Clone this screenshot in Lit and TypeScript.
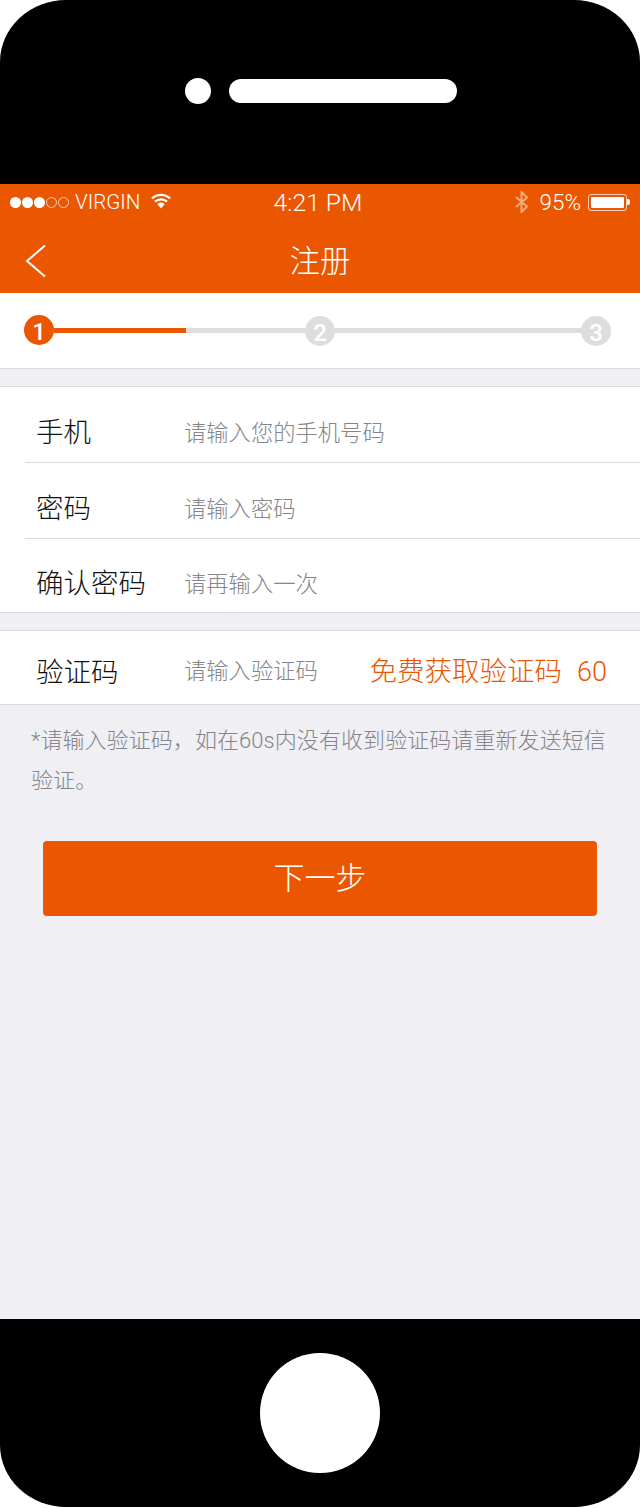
import { LitElement, html, css } from "lit";
import { customElement } from "lit/decorators.js";

@customElement("app-root")
export class AppRoot extends LitElement {
  static styles = css`
    :host { display: block; width: 640px; height: 1508px; background: #fff; font-family: Roboto, "Noto Sans CJK SC", sans-serif; }
    * { box-sizing: border-box; }
    .phone { width: 640px; height: 1507px; background: #000; border-radius: 66px / 62px; overflow: hidden; display: flex; flex-direction: column; }
    .top { height: 184px; flex: none; display: flex; align-items: center; padding: 0 183px 2px 185px; gap: 18px; }
    .camera { width: 26px; height: 26px; border-radius: 50%; background: #fff; flex: none; }
    .speaker { width: 228px; height: 24px; border-radius: 12px; background: #fff; flex: none; }
    .screen { height: 1135px; flex: none; background: #efeff4; display: flex; flex-direction: column; }
    .bottom { flex: 1; display: flex; justify-content: center; align-items: flex-start; padding-top: 34px; }
    .home { width: 120px; height: 120px; border-radius: 50%; background: #fff; }

    .orange { background: #eb5600; color: #fff; height: 109px; flex: none; display: flex; flex-direction: column; }
    .status { height: 36px; display: flex; align-items: center; padding: 0 10px; font-weight: 300; position: relative; }
    .dots { display: flex; gap: 1px; margin-right: 6px; }
    .dot { width: 11px; height: 11px; border-radius: 50%; background: #fff; }
    .dot.off { background: none; border: 1px solid rgba(255, 255, 255, 0.65); }
    .carrier { font-size: 20.6px; margin-right: 10px; }
    .wifi { margin-top: -2px; }
    .time { position: absolute; left: 0; right: 4px; text-align: center; font-size: 24.7px; }
    .right { margin-left: auto; display: flex; align-items: center; }
    .pct { margin: 0 7px 0 11px; font-size: 22.4px; }
    .battery { display: flex; align-items: center; }
    .cell { width: 39px; height: 17px; border: 1px solid rgba(255, 255, 255, 0.7); border-radius: 3px; padding: 2px; }
    .cell span { display: block; height: 100%; width: 33px; background: #fff; border-radius: 1px; }
    .tip { width: 3px; height: 6px; background: #fff; border-radius: 0 2px 2px 0; }
    .nav { flex: 1; display: flex; align-items: center; justify-content: center; position: relative; padding-top: 4px; }
    .back { position: absolute; left: 25px; top: 24px; }
    .title { font-size: 30.5px; font-weight: 300; }

    .steps { height: 76px; flex: none; background: #fff; border-bottom: 1px solid #dcdce0; display: flex; align-items: center; padding: 0 28px 1px 24px; }
    .circle { width: 30px; height: 30px; border-radius: 50%; background: #ddd; color: #fff; display: flex; align-items: center; justify-content: center; font: 500 24px Roboto, sans-serif; flex: none; margin-top: 2px; padding-top: 3px; }
    .circle.on { background: #eb5600; margin-top: 0; }
    .track { width: 251px; height: 5px; background: #ddd; flex: none; }
    .track.rest { width: 246px; }
    .track span { display: block; height: 100%; width: 132px; background: #eb5600; }

    .group { background: #fff; border-top: 1px solid #d9d9dd; border-bottom: 1px solid #d9d9dd; margin-top: 17px; flex: none; }
    .row { height: 75px; margin-left: 25px; padding: 11px 0 0 11px; display: flex; align-items: center; }
    .row + .row { border-top: 1px solid #d9d9dd; height: 76px; padding-top: 10px; }
    .row:last-child:not(:first-child) { height: 74px; }
    .row.code { height: 73px; padding-top: 4px; }
    .label { width: 148px; font-size: 27.5px; font-weight: 300; color: #111; flex: none; }
    .ph { font-size: 22.3px; font-weight: 300; color: #85858a; flex: 1; padding-top: 2px; }
    .row.code .ph { padding: 0 0 2px; }
    .get { color: #eb5600; font-size: 27.5px; font-weight: 300; margin: 0 33px 2px 0; display: flex; align-items: baseline; gap: 15px; }
    .count { font-size: 27px; }
    .note { font-size: 22px; line-height: 40px; color: #85858a; font-weight: 300; padding: 16px 30px 0 31px; letter-spacing: 0.07px; }
    .btn { margin: 40px 43px 0; height: 75px; background: #eb5600; color: #fff; border-radius: 4px; display: flex; align-items: center; justify-content: center; font-size: 31px; font-weight: 300; padding-bottom: 6px; }
  `;

  render() {
    return html`
      <div class="phone">
        <div class="top"><div class="camera"></div><div class="speaker"></div></div>
        <div class="screen">
          <div class="orange">
            <div class="status">
              <div class="dots">
                <span class="dot"></span><span class="dot"></span><span class="dot"></span><span class="dot off"></span><span class="dot off"></span>
              </div>
              <span class="carrier">VIRGIN</span>
              <svg class="wifi" width="20" height="16" viewBox="0 0 20 16">
                <path d="M1 5.5 A13 13 0 0 1 19 5.5 M4 8.7 A9 9 0 0 1 16 8.7" fill="none" stroke="#fff" stroke-width="2.4"/>
                <path d="M6.3 11 A5.5 5.5 0 0 1 13.7 11 L10 15.5Z" fill="#fff"/>
              </svg>
              <span class="time">4:21 PM</span>
              <div class="right">
                <svg width="14" height="22" viewBox="0 0 14 22">
                  <path d="M1 6 L12 15.5 L6.5 21 V1 L12 6.5 L1 16" fill="none" stroke="#fff" stroke-opacity=".5" stroke-width="2"/>
                </svg>
                <span class="pct">95%</span>
                <div class="battery"><div class="cell"><span></span></div><div class="tip"></div></div>
              </div>
            </div>
            <div class="nav">
              <svg class="back" width="22" height="34" viewBox="0 0 22 34">
                <path d="M20 1.5 L2 17 L20 32.5" fill="none" stroke="#fff" stroke-width="2"/>
              </svg>
              <span class="title">注册</span>
            </div>
          </div>
          <div class="steps">
            <div class="circle on">1</div>
            <div class="track"><span></span></div>
            <div class="circle">2</div>
            <div class="track rest"></div>
            <div class="circle">3</div>
          </div>
          <div class="group">
            <div class="row"><span class="label">手机</span><span class="ph">请输入您的手机号码</span></div>
            <div class="row"><span class="label">密码</span><span class="ph">请输入密码</span></div>
            <div class="row"><span class="label">确认密码</span><span class="ph">请再输入一次</span></div>
          </div>
          <div class="group">
            <div class="row code">
              <span class="label">验证码</span><span class="ph">请输入验证码</span>
              <span class="get"><span>免费获取验证码</span><span class="count">60</span></span>
            </div>
          </div>
          <div class="note">*请输入验证码，如在60s内没有收到验证码请重新发送短信验证。</div>
          <div class="btn">下一步</div>
        </div>
        <div class="bottom"><div class="home"></div></div>
      </div>
    `;
  }
}
